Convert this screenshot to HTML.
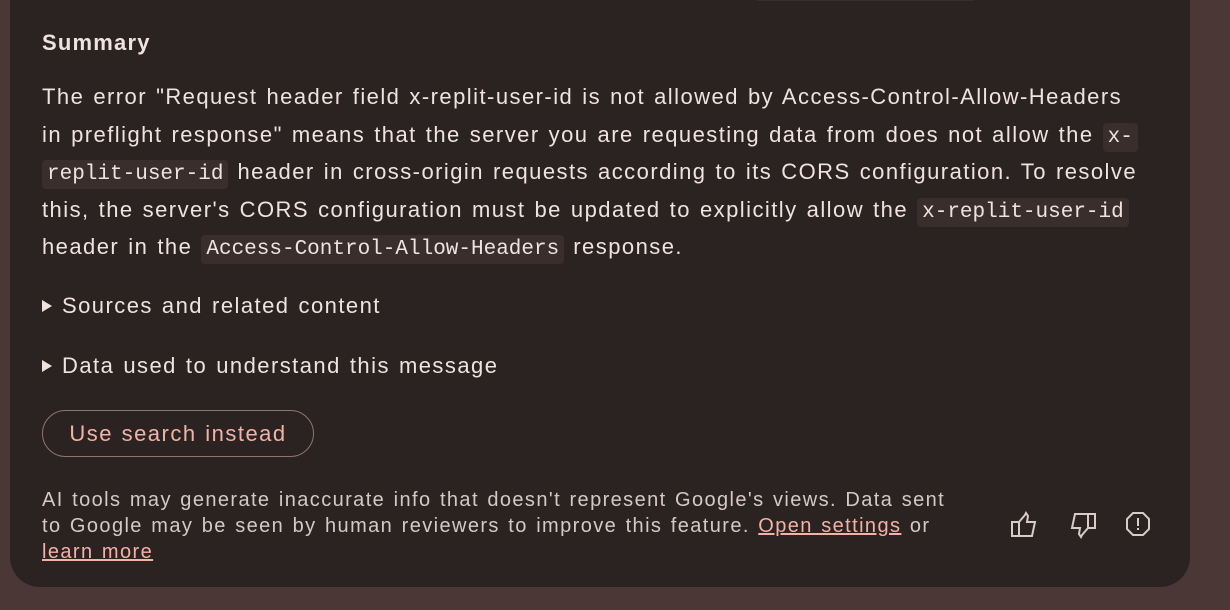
<!DOCTYPE html>
<html><head><style>
html,body{margin:0;padding:0;width:1230px;height:610px;overflow:hidden;background:#4a3736;}
.card{position:absolute;left:10px;top:-40px;width:1180px;height:627px;background:#2b2322;border-radius:0 0 30px 30px;}
.topcode{position:absolute;left:755px;top:-10px;width:221px;height:11px;background:#3a2e2c;border-radius:4px;}
.t{position:absolute;left:42px;font-family:"Liberation Sans",sans-serif;color:#f0e2df;white-space:nowrap;letter-spacing:1.45px;word-spacing:1.5px;}
h3{position:absolute;left:42px;top:30px;margin:0;font:bold 22px "Liberation Sans",sans-serif;color:#f0e2df;letter-spacing:1.2px;}
.p{font-size:22px;line-height:37.5px;top:78px;}
code{font-family:"Liberation Mono",monospace;font-size:21px;line-height:1;letter-spacing:0;word-spacing:0;background:#3a2e2c;border-radius:4px;padding:3px 5px;}
.det{font-size:22px;}
.tri{display:inline-block;width:0;height:0;border-left:10px solid #f0e2df;border-top:6.5px solid transparent;border-bottom:6.5px solid transparent;margin-right:10px;vertical-align:1px;}
.btn{position:absolute;left:42px;top:410px;width:270px;height:45px;border:1.5px solid #8f7470;border-radius:24px;color:#f3b2a6;font:22px "Liberation Sans",sans-serif;line-height:45px;text-align:center;letter-spacing:1.5px;word-spacing:1px;}
.f{font-size:20px;line-height:26px;top:487px;color:#d6c8c5;letter-spacing:1.4px;word-spacing:1.5px;}
a{color:#f3b2a6;text-decoration:underline;}
svg{position:absolute;top:510px;}
</style></head><body>
<div class="card"></div>
<div class="topcode"></div>
<h3>Summary</h3>
<div class="t p">The error "Request header field x-replit-user-id is not allowed by Access-Control-Allow-Headers<br>in preflight response" means that the server you are requesting data from does not allow the <code>x-</code><br><code>replit-user-id</code> header in cross-origin requests according to its CORS configuration. To resolve<br>this, the server's CORS configuration must be updated to explicitly allow the <code>x-replit-user-id</code><br>header in the <code>Access-Control-Allow-Headers</code> response.</div>
<div class="t det" style="top:293px"><span class="tri"></span>Sources and related content</div>
<div class="t det" style="top:353px"><span class="tri"></span>Data used to understand this message</div>
<div class="btn">Use search instead</div>
<div class="t f">AI tools may generate inaccurate info that doesn't represent Google's views. Data sent<br>to Google may be seen by human reviewers to improve this feature. <a>Open settings</a> or<br><a>learn more</a></div>
<svg style="left:1010px" width="32" height="30" viewBox="0 0 32 30" fill="none" stroke="#d9cbc8" stroke-width="2"><path d="M2 12h7v14H2z M9 12l6-7 1-2 2 3-1 6h8l-3 14H9"/></svg>
<svg style="left:1065px" width="32" height="30" viewBox="0 0 32 30" fill="none" stroke="#d9cbc8" stroke-width="2"><path d="M30 18h-7V4h7z M23 18l-6 7-1 2-2-3 1-6H7l3-14h13"/></svg>
<svg style="left:1124px" width="28" height="30" viewBox="0 0 28 30"><path d="M9 3h10l6 6v10l-6 6H9l-6-6V9z" fill="none" stroke="#d9cbc8" stroke-width="2"/><rect x="13" y="8" width="2" height="8" fill="#d9cbc8"/><rect x="13" y="18" width="2" height="2" fill="#d9cbc8"/></svg>
</body></html>
